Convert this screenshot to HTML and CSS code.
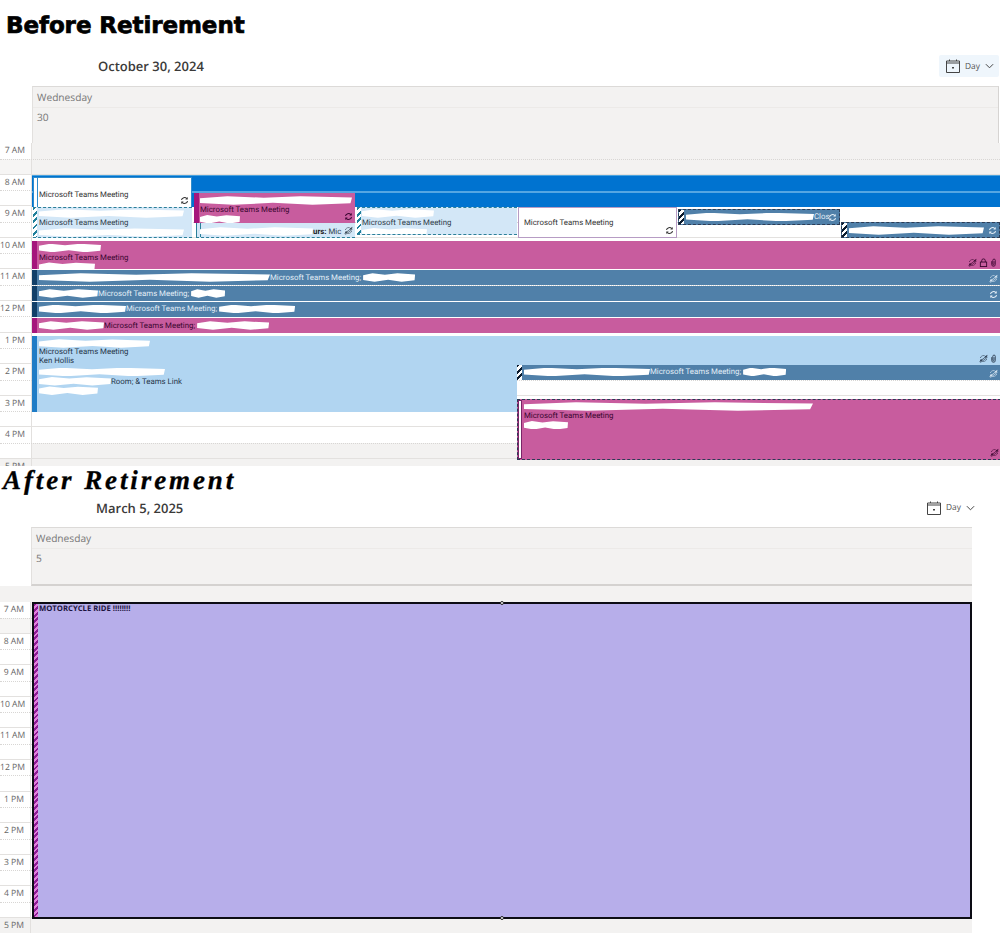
FILE: index.html
```html
<!DOCTYPE html>
<html lang="en">
<head>
<meta charset="utf-8">
<title>Before and After Retirement</title>
<link rel="stylesheet" href="styles.css">
</head>
<body>
<svg class="defs" width="0" height="0" aria-hidden="true">
  <symbol id="sync" viewBox="0 0 10 10"><path d="M1.6 4.4A3.5 3.5 0 0 1 7.6 2.9M8.4 5.6A3.5 3.5 0 0 1 2.4 7.1" fill="none" stroke="currentColor" stroke-width="1.2"/><path d="M8.6 1.2V4H5.9zM1.4 8.8V6H4.1z" fill="currentColor"/></symbol>
  <symbol id="nosync" viewBox="0 0 10 10"><path d="M1.6 4.4A3.5 3.5 0 0 1 7.6 2.9M8.4 5.6A3.5 3.5 0 0 1 2.4 7.1" fill="none" stroke="currentColor" stroke-width=".9" stroke-dasharray="1.4 .7"/><path d="M8.6 1.2V4H5.9zM1.4 8.8V6H4.1z" fill="currentColor"/><path d="M.5 8.5 9.5 1.5M1.5 9.5 9.5 3.5" stroke="currentColor" stroke-width=".7"/></symbol>
  <symbol id="lock" viewBox="0 0 10 10"><rect x="1.5" y="4.5" width="7" height="5" fill="none" stroke="currentColor"/><path d="M3 4.5V3a2 2 0 0 1 4 0v1.5" fill="none" stroke="currentColor"/></symbol>
  <symbol id="clip" viewBox="0 0 10 10"><path d="M3 3.5V7.2a2 2 0 0 0 4 0V2.6a1.4 1.4 0 0 0-2.8 0V7a.7.7 0 0 0 1.4 0V3.5" fill="none" stroke="currentColor" stroke-width=".9"/></symbol>
  <symbol id="cal" viewBox="0 0 14 14"><path d="M.5 2h13v11.5H.5zM.5 4h13M3.5 .5V2M10.5 .5V2" fill="none" stroke="currentColor"/><rect x="6" y="8" width="2" height="1.5" fill="currentColor"/></symbol>
  <symbol id="chev" viewBox="0 0 10 6"><path d="M1 1 5 5 9 1" fill="none" stroke="currentColor" stroke-width="1.1"/></symbol>
</svg>

<section class="panel panel-before">
  <h1 class="title title-before">Before Retirement</h1>
  <div class="toolbar">
    <div class="date">October 30, 2024</div>
    <div class="view"><svg class="cal-ic"><use href="#cal"/></svg><span>Day</span><svg class="chev-ic"><use href="#chev"/></svg></div>
  </div>
  <div class="cal">
    <div class="head"><div class="head-gutter"></div><div class="head-main"><div class="head-day">Wednesday</div><div class="head-num">30</div></div></div>
    <div class="hours">
      <div class="hour off-first"><div class="lbl">7 AM</div><div class="slot"></div></div>
      <div class="hour"><div class="lbl">8 AM</div><div class="slot"></div></div>
      <div class="hour"><div class="lbl">9 AM</div><div class="slot"></div></div>
      <div class="hour"><div class="lbl">10 AM</div><div class="slot"></div></div>
      <div class="hour"><div class="lbl">11 AM</div><div class="slot"></div></div>
      <div class="hour"><div class="lbl">12 PM</div><div class="slot"></div></div>
      <div class="hour"><div class="lbl">1 PM</div><div class="slot"></div></div>
      <div class="hour"><div class="lbl">2 PM</div><div class="slot"></div></div>
      <div class="hour"><div class="lbl">3 PM</div><div class="slot"></div></div>
      <div class="hour off-half"><div class="lbl">4 PM</div><div class="slot"></div></div>
      <div class="hour off"><div class="lbl">5 PM</div><div class="slot"></div></div>

      <div class="ev band"></div>

      <div class="ev white blue-edge a1"><i class="bar bar-white"></i>
        <div class="ln"><span class="rd w120 ghost"></span></div><div class="ln">Microsoft Teams Meeting</div>
        <span class="icons"><svg class="ic"><use href="#sync"/></svg></span></div>

      <div class="ev pale dash a3"><i class="bar hatch"></i>
        <div class="ln"><span class="rd w145"></span></div><div class="ln">Microsoft Teams Meeting</div><div class="ln"><span class="rd w145"></span></div></div>

      <div class="ev pale dash a4"><i class="bar bar-pale"></i>
        <div class="ln"><span class="rd w113"></span><b class="dark">urs:</b>&nbsp;Mic</div>
        <span class="icons"><svg class="ic"><use href="#nosync"/></svg></span></div>

      <div class="ev mag a2"><i class="bar bar-mag"></i>
        <div class="ln"><span class="rd w152"></span></div><div class="ln">Microsoft Teams Meeting</div><div class="ln"><span class="rd w40"></span></div>
        <span class="icons"><svg class="ic"><use href="#sync"/></svg></span></div>

      <div class="ev pale dash a5"><i class="bar hatch"></i>
        <div class="ln"><span class="rd w72"></span></div><div class="ln">Microsoft Teams Meeting</div><div class="ln"><span class="rd w65"></span></div></div>

      <div class="ev white a6">
        <div class="ln"><span class="rd w90 ghost"></span></div><div class="ln">Microsoft Teams Meeting</div>
        <span class="icons"><svg class="ic"><use href="#sync"/></svg></span></div>

      <div class="ev steel dash-dark a7"><i class="bar hatch-dark"></i>
        <div class="ln"><span class="rd w128"></span>Clos</div>
        <span class="icons"><svg class="ic"><use href="#sync"/></svg></span></div>

      <div class="ev steel dash-dark a8"><i class="bar hatch-dark"></i>
        <div class="ln"><span class="rd w135"></span></div>
        <span class="icons"><svg class="ic"><use href="#sync"/></svg></span></div>

      <div class="ev mag wide b1"><i class="bar bar-mag"></i>
        <div class="ln"><span class="rd w62"></span></div><div class="ln">Microsoft Teams Meeting</div><div class="ln"><span class="rd w56"></span></div>
        <span class="icons"><svg class="ic"><use href="#nosync"/></svg><svg class="ic"><use href="#lock"/></svg><svg class="ic"><use href="#clip"/></svg></span></div>

      <div class="ev steel wide b2"><i class="bar bar-navy"></i>
        <div class="ln"><span class="rd w231"></span>Microsoft Teams Meeting;&nbsp;<span class="rd w52"></span></div>
        <span class="icons"><svg class="ic"><use href="#nosync"/></svg></span></div>

      <div class="ev steel wide b3"><i class="bar bar-navy"></i>
        <div class="ln"><span class="rd w59"></span>Microsoft Teams Meeting;&nbsp;<span class="rd w34"></span></div>
        <span class="icons"><svg class="ic"><use href="#sync"/></svg></span></div>

      <div class="ev steel wide b4"><i class="bar bar-navy"></i>
        <div class="ln"><span class="rd w87"></span>Microsoft Teams Meeting;&nbsp;<span class="rd w76"></span></div></div>

      <div class="ev mag wide b5"><i class="bar bar-mag"></i>
        <div class="ln"><span class="rd w65"></span>Microsoft Teams Meeting;&nbsp;<span class="rd w72"></span></div></div>

      <div class="ev sky wide b6"><i class="bar bar-blue"></i>
        <div class="ln"><span class="rd w111"></span></div><div class="ln">Microsoft Teams Meeting</div><div class="ln">Ken Hollis</div>
        <span class="icons"><svg class="ic"><use href="#nosync"/></svg><svg class="ic"><use href="#clip"/></svg></span></div>

      <div class="ev sky b7"><i class="bar bar-blue"></i>
        <div class="ln"><span class="rd w126"></span></div><div class="ln"><span class="rd w72"></span>Room; &amp; Teams Link</div><div class="ln"><span class="rd w59"></span></div></div>

      <div class="ev steel b8"><i class="bar hatch-dark"></i>
        <div class="ln"><span class="rd w126"></span>Microsoft Teams Meeting;&nbsp;<span class="rd w43"></span></div>
        <span class="icons"><svg class="ic"><use href="#nosync"/></svg></span></div>

      <div class="ev mag dash-dark b9"><i class="bar bar-outline"></i>
        <div class="ln"><span class="rd w289"></span></div><div class="ln">Microsoft Teams Meeting</div><div class="ln"><span class="rd w44"></span></div>
        <span class="icons"><svg class="ic"><use href="#nosync"/></svg></span></div>
    </div>
  </div>
</section>

<section class="panel panel-after">
  <h1 class="title title-after">After Retirement</h1>
  <div class="toolbar">
    <div class="date">March 5, 2025</div>
    <div class="view"><svg class="cal-ic"><use href="#cal"/></svg><span>Day</span><svg class="chev-ic"><use href="#chev"/></svg></div>
  </div>
  <div class="cal">
    <div class="head"><div class="head-gutter"></div><div class="head-main"><div class="head-day">Wednesday</div><div class="head-num">5</div></div></div>
    <div class="half-row"></div>
    <div class="hours">
      <div class="hour off-first"><div class="lbl">7 AM</div><div class="slot"></div></div>
      <div class="hour"><div class="lbl">8 AM</div><div class="slot"></div></div>
      <div class="hour"><div class="lbl">9 AM</div><div class="slot"></div></div>
      <div class="hour"><div class="lbl">10 AM</div><div class="slot"></div></div>
      <div class="hour"><div class="lbl">11 AM</div><div class="slot"></div></div>
      <div class="hour"><div class="lbl">12 PM</div><div class="slot"></div></div>
      <div class="hour"><div class="lbl">1 PM</div><div class="slot"></div></div>
      <div class="hour"><div class="lbl">2 PM</div><div class="slot"></div></div>
      <div class="hour"><div class="lbl">3 PM</div><div class="slot"></div></div>
      <div class="hour"><div class="lbl">4 PM</div><div class="slot"></div></div>
      <div class="hour off"><div class="lbl">5 PM</div><div class="slot"></div></div>
      <div class="ride"><i class="ride-bar"></i><span class="ride-text">MOTORCYCLE RIDE !!!!!!!!</span><i class="handle handle-top"></i><i class="handle handle-bottom"></i></div>
    </div>
  </div>
</section>
</body>
</html>
```
FILE: styles.css
```css
* { box-sizing: border-box; }
html, body { margin: 0; padding: 0; background: #fff; }
body { width: 1000px; height: 933px; overflow: hidden; font-family: "Open Sans", "Liberation Sans", sans-serif; color: #333; text-rendering: geometricPrecision; }
.defs { position: absolute; }

.panel { overflow: hidden; }
.panel-before { height: 466px; }
.panel-after { height: 467px; }

.title { margin: 0; color: #000; white-space: nowrap; }
.title-before { height: 46px; padding: 12px 0 0 6px; font: 700 23px/28px "DejaVu Sans", sans-serif; letter-spacing: -.08px; -webkit-text-stroke: .7px #000; }
.title-after { height: 22px; padding: 3px 0 0 3px; font: italic 700 27px/22px "Liberation Serif", serif; letter-spacing: 2.9px; -webkit-text-stroke: .3px #000; }

.toolbar { display: flex; align-items: center; justify-content: space-between; }
.panel-before .toolbar { height: 40px; padding: 0 1px 0 98px; }
.panel-after .toolbar { height: 39px; width: 976px; padding: 0 0 0 96px; }
.date { font-size: 13px; font-weight: 600; color: #3b3a39; }
.view { display: flex; align-items: center; height: 22px; font-size: 8.4px; color: #555; }
.panel-before .view { width: 60px; padding-left: 7px; background: #eff6fc; border-radius: 2px; }
.panel-after .view { width: 49px; }
.cal-ic { width: 14px; height: 14px; color: #444; }
.view span { margin-left: 5px; }
.chev-ic { width: 9px; height: 6px; margin-left: 5px; color: #444; }

.head { display: flex; }
.head-gutter { flex: none; }
.panel-before .head-gutter { width: 32px; }
.panel-after .head-gutter { width: 31px; }
.head-main { flex: 1; background: #f3f2f1; border-top: 1px solid #dcdad8; border-left: 1px solid #e2e0de; padding-left: 5px; font-size: 10.2px; color: #777; }
.panel-before .head-main { height: 57px; border-right: 1px solid #d6d4d2; margin-right: 1px; }
.panel-after .head-main { height: 59px; margin-right: 28px; border-bottom: 2px solid #d4d2d0; }
.head-day { height: 21px; line-height: 20px; margin-left: -5px; padding-left: 4px; border-bottom: 1px solid #eceae8; }
.head-num { padding-top: 2px; line-height: 14px; margin-left: -1px; }

.half-row { height: 16px; width: 972px; background: #f3f2f1; }

.hours { position: relative; }
.panel-after .hours { width: 972px; }
.hour { position: relative; display: flex; height: 31.6px; background: #fff; border-bottom: 1px solid #e3e1df; }
.hour::after { content: ""; position: absolute; left: 0; right: 0; top: 15.5px; border-top: 1px dotted #d8d6d4; }
.lbl { flex: none; width: 32px; padding: 2px 6px 0 0; font-size: 8.6px; line-height: 10px; text-align: right; color: #666; border-right: 1px solid #e2e0de; white-space: nowrap; }
.panel-after .lbl { width: 31px; }
.slot { flex: 1; }
.off-first { background: linear-gradient(#fff 15.8px, #f6f5f4 15.8px); }
.off-first .slot { background: #f3f2f1; }
.off-half .slot { background: linear-gradient(#fff 15.8px, #f3f2f1 15.8px); }
.off { background: #f3f2f1; }

.ev { position: absolute; overflow: hidden; padding-left: 7px; font-family: Roboto, "Open Sans", sans-serif; font-size: 7.85px; line-height: 9.4px; color: #333; white-space: nowrap; }
.ln { display: flex; align-items: center; height: 9.4px; padding-top: 1.5px; }
.bar { position: absolute; left: 0; top: 0; bottom: 0; width: 5px; }
.rd { flex: none; display: inline-block; height: 8.5px; background: #fff; clip-path: polygon(0 25%, 18% 0, 42% 18%, 66% 2%, 100% 16%, 99% 82%, 74% 100%, 48% 78%, 22% 100%, 0 80%); }
.icons { position: absolute; right: 2px; bottom: 2px; display: flex; gap: 1.5px; }
.ic { width: 9px; height: 9px; display: block; }
.dark { color: #222; font-weight: 700; }

.white { background: #fff; }
.mag { background: #c85c9e; color: #3a0630; }
.steel { background: #5080a9; color: #e3eef7; }
.sky { background: #b1d5f1; color: #26364a; }
.pale { background: #d3e7f7; color: #2f3d4a; }
.dash { border-bottom: 1px dashed #2b7f99; border-top: 1px dashed #2b7f99; }
.dash-dark { border: 1px dashed #2c3c55; }

.bar-white { background: #fff; border-right: 1px solid #2f8ccc; width: 4px; }
.bar-mag { background: #a5167c; }
.bar-navy { background: #123f68; }
.bar-blue { background: #1f7cc6; }
.bar-pale { background: #d3e7f7; border-right: 1px solid #2b7f99; border-left: 1px solid #2b7f99; }
.bar-outline { background: #fff; border: 1px solid #7a2468; width: 4px; }
.hatch { background: repeating-linear-gradient(135deg, #1f7f9a 0 2px, #fff 2px 4.5px); width: 4px; }
.hatch-dark { background: repeating-linear-gradient(135deg, #0b1b2e 0 2px, #fff 2px 4.5px); width: 5px; }

.band { left: 32px; top: 32px; width: 968px; height: 32px; padding: 0; background: linear-gradient(#0073d0 15.5px, #55a6e2 15.5px, #55a6e2 16.5px, #0073d0 16.5px); border-top: 1px solid #4aa3de; }
.a1 { left: 33px; top: 34px; width: 159px; height: 30px; padding: 2px 0 0 5px; }
.blue-edge { border: 1px solid #2f8ccc; border-bottom: 0; }
.a2 { left: 194px; top: 50px; width: 161px; height: 29.5px; padding: 2px 0 0 6px; }
.a2 .ln:first-child { height: 12px; }
.a3 { left: 33px; top: 64px; width: 159px; height: 31px; padding: 0 0 0 6px; }
.a3 .ln { height: 9.5px; }
.a4 { left: 196px; top: 79px; width: 159px; height: 16px; padding: 3px 0 0 4px; }
.a5 { left: 357px; top: 64px; width: 160px; height: 28px; padding-left: 5px; }
.a5 .ln:first-child { height: 11px; }
.a6 { left: 518px; top: 64px; width: 159px; height: 31px; padding: 0 0 0 5px; border: 1px solid #b79cc4; }
.a6 .ln:first-child { height: 9.5px; }
.a7 { left: 678px; top: 66px; width: 162px; height: 15.5px; padding-top: 1.5px; }
.a8 { left: 841px; top: 79px; width: 159px; height: 16px; padding-top: 2px; }
.b1 { top: 98px; height: 28px; padding-top: 1.5px; }
.wide { left: 32px; width: 968px; }
.b2 { top: 127px; height: 15px; padding-top: 2px; }
.b3 { top: 143px; height: 14.5px; padding-top: 2px; }
.b4 { top: 158.5px; height: 15px; padding-top: 2px; }
.b5 { top: 175px; height: 14.5px; padding-top: 2px; }
.b6 { top: 193px; height: 28.5px; padding-top: 2.5px; line-height: 8.7px; }
.b6 .ln { height: 8.7px; }
.b7 { left: 32px; top: 222px; width: 485px; height: 47px; padding-top: 1.5px; }
.b8 { left: 517px; top: 222px; width: 483px; height: 15px; padding-top: 1.5px; }
.b9 { left: 517px; top: 256px; width: 484px; height: 61px; padding: 1px 0 0 6px; border-right: 0; }

.w34 { width: 34px; } .w40 { width: 40px; } .w43 { width: 43px; } .w44 { width: 44px; }
.w52 { width: 52px; } .w56 { width: 56px; } .w59 { width: 59px; } .w62 { width: 62px; }
.w65 { width: 65px; } .w72 { width: 72px; } .w76 { width: 76px; } .w87 { width: 87px; }
.w90 { width: 90px; } .w111 { width: 111px; } .w113 { width: 113px; } .w120 { width: 120px; }
.w126 { width: 126px; } .w128 { width: 128px; } .w135 { width: 135px; } .w145 { width: 145px; }
.w152 { width: 152px; } .w231 { width: 231px; } .w289 { width: 289px; }

.ride { position: absolute; left: 32px; top: 0; width: 940px; height: 316.5px; background: #b7aeea; border: 2px solid #0c0c14; padding: 1px 0 0 5px; }
.ride-bar { position: absolute; left: 0; top: 0; bottom: 0; width: 3.5px; background: repeating-linear-gradient(135deg, #8c1a94 0 2px, #e27fdc 2px 4px); }
.ride-text { display: block; font-size: 7.7px; font-weight: 700; line-height: 9px; color: #1c1440; }
.handle { position: absolute; left: 466px; width: 4px; height: 4px; background: #fff; border: 1px solid #222; border-radius: 50%; }
.handle-top { top: -3px; }
.handle-bottom { bottom: -3px; }
```
